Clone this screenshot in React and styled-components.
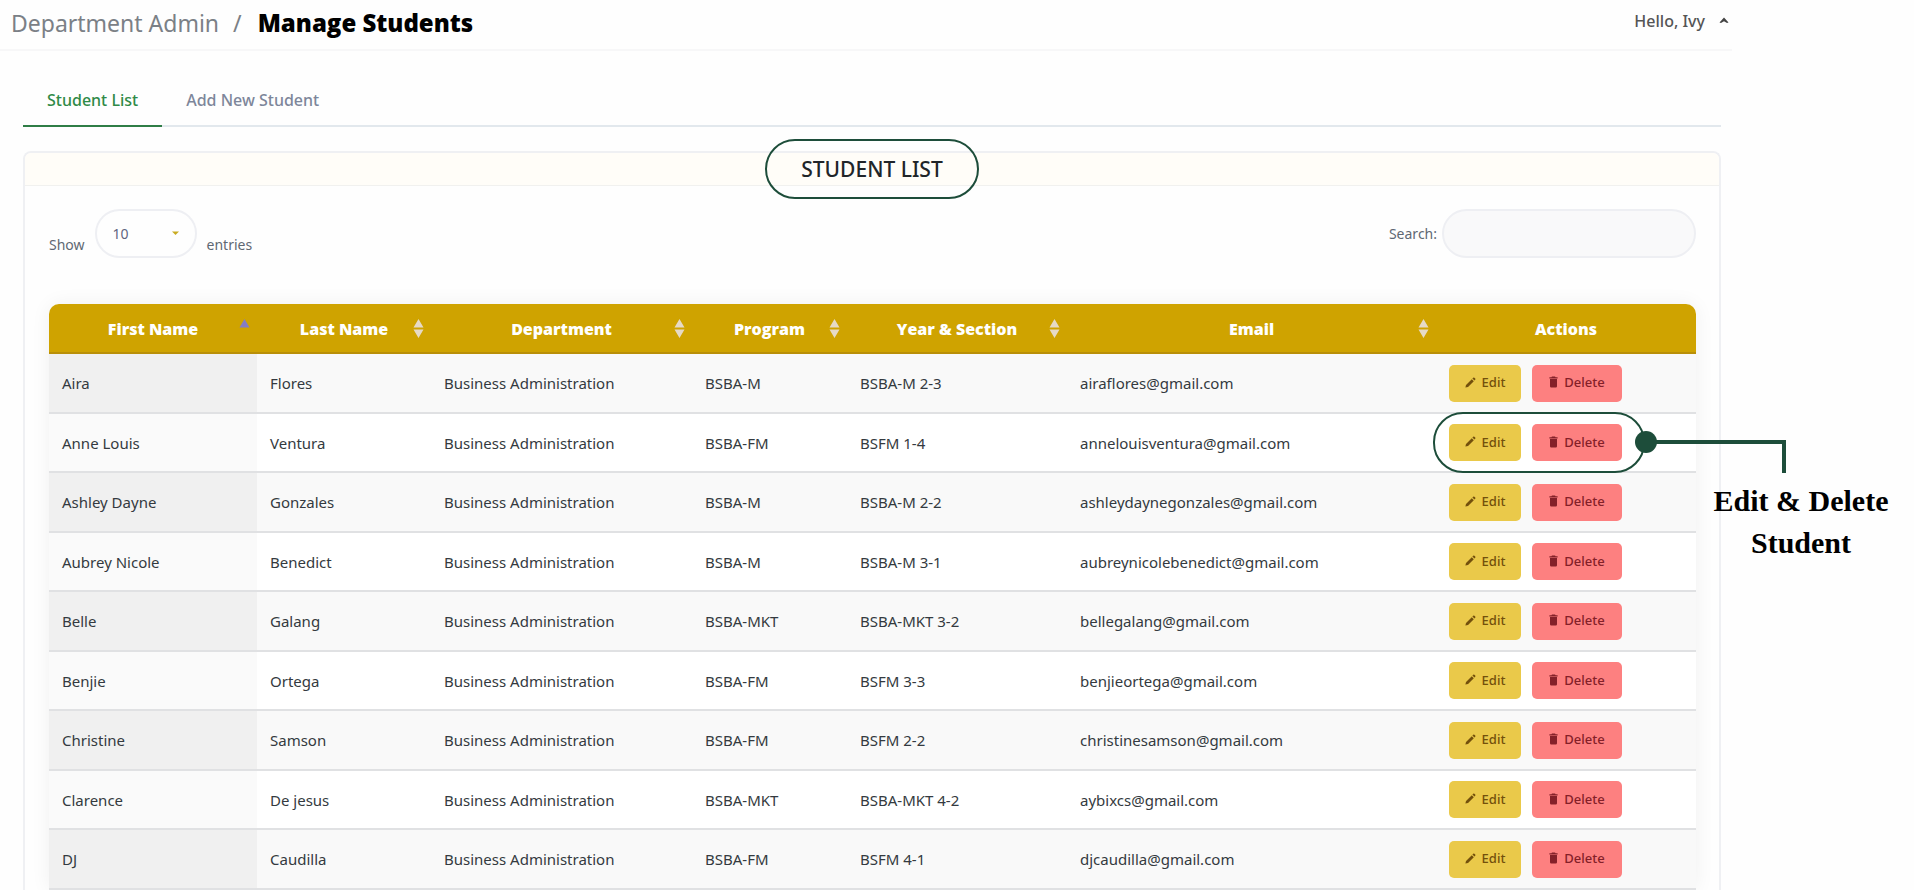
import React from "react";
import styled, { createGlobalStyle } from "styled-components";

const GlobalStyle = createGlobalStyle`
  *, *::before, *::after { box-sizing: border-box; }
  body {
    margin: 0;
    background: #fefefe;
    color: #343a40;
    font-family: "Noto Sans", "Open Sans", sans-serif;
    font-size: 15px;
  }
  button, input, select { font: inherit; }
`;

const green = "#1d4d3a";
const heavyFont = `"Open Sans", "Noto Sans", sans-serif`;

const Page = styled.div`
  display: grid;
  grid-template-columns: minmax(0, 1fr) 182px;
  min-height: 100vh;
`;

const Main = styled.main`
  display: flex;
  flex-direction: column;
`;

const TopBar = styled.header`
  display: flex;
  align-items: center;
  justify-content: space-between;
  height: 51px;
  padding: 0 3px 4px 11px;
  border-bottom: 2px solid #f7f7f8;
`;

const Breadcrumb = styled.nav`
  display: flex;
  align-items: center;
  gap: 14px;
  font-size: 23px;
  line-height: 32px;
  color: #7b8086;
`;

const Crumb = styled.a`
  color: inherit;
  text-decoration: none;
`;

const PageTitle = styled.h1`
  margin: 0 0 0 2px;
  font-family: ${heavyFont};
  font-size: 24px;
  font-weight: 800;
  color: #000;
`;

const UserMenu = styled.button`
  display: flex;
  align-items: center;
  gap: 14px;
  padding: 0 0 4px;
  border: 0;
  background: none;
  color: #555;
  font-size: 16px;
  font-weight: 500;
  line-height: 24px;
`;

const Content = styled.div`
  flex: 1;
  display: flex;
  flex-direction: column;
  padding: 24px 11px 0 23px;
`;

const Tabs = styled.nav`
  display: flex;
  height: 52px;
  border-bottom: 2px solid #e2e8ed;
`;

const Tab = styled.button`
  height: 52px;
  padding: 0 24px;
  border: 0;
  border-bottom: 2px solid ${(p) => (p.$active ? "#2f7d46" : "transparent")};
  background: none;
  color: ${(p) => (p.$active ? "#2f8a47" : "#7d869a")};
  font-size: 16px;
  font-weight: 500;
`;

const Card = styled.section`
  flex: 1;
  margin-top: 24px;
  border: 2px solid #eff0f3;
  border-bottom: 0;
  border-radius: 8px 8px 0 0;
`;

const CardHeader = styled.div`
  display: flex;
  justify-content: center;
  height: 33px;
  border-bottom: 1px solid #f1f1ef;
  border-radius: 6px 6px 0 0;
  background: #fffdf8;
`;

const CardTitle = styled.h2`
  position: relative;
  margin: 0;
  font-size: 21px;
  font-weight: 500;
  line-height: 32px;
  color: #212529;
`;

const Ring = styled.span`
  position: absolute;
  inset: ${(p) => p.$inset};
  border: 2px solid ${green};
  border-radius: 30px;
  pointer-events: none;
`;

const CardBody = styled.div`
  padding: 23px 23px 0 24px;
`;

const Controls = styled.div`
  display: flex;
  align-items: center;
  justify-content: space-between;
  margin-bottom: 46px;
  font-size: 14px;
  color: #5f6873;
`;

const LengthLabel = styled.label`
  display: flex;
  align-items: flex-end;
  gap: 10px;
  line-height: 26px;
`;

const SelectWrap = styled.span`
  position: relative;
  display: block;

  svg {
    position: absolute;
    top: 22px;
    right: 18px;
    pointer-events: none;
  }
`;

const Select = styled.select`
  display: block;
  width: 102px;
  height: 49px;
  padding: 0 16px;
  appearance: none;
  border: 2px solid #eeeff3;
  border-radius: 25px;
  background: #fefefe;
  color: #5f6580;
`;

const SearchLabel = styled.label`
  display: flex;
  align-items: center;
  gap: 5px;
`;

const SearchInput = styled.input`
  width: 254px;
  height: 49px;
  padding: 0 20px;
  border: 2px solid #eeeff3;
  border-radius: 25px;
  background: #f9f9fa;
`;

const Table = styled.table`
  width: 100%;
  table-layout: fixed;
  border-collapse: separate;
  border-spacing: 0;
  border-radius: 10px 10px 0 0;
  box-shadow: 0 0 20px rgba(0, 0, 0, 0.06);
`;

const Th = styled.th`
  position: relative;
  height: 50px;
  padding: 2px 13px 0;
  border-bottom: 2px solid #b98f08;
  background: #cfa300;
  color: #fff;
  font-family: ${heavyFont};
  font-size: 16px;
  font-weight: 800;

  &:first-child { border-top-left-radius: 10px; }
  &:last-child { border-top-right-radius: 10px; }

  svg {
    position: absolute;
    right: 7px;
    top: 15px;
  }
`;

const Row = styled.tr`
  height: 59px;
  background: #fff;

  &:nth-child(odd) {
    height: 60px;
    background: #f9f9f9;
  }
`;

const Td = styled.td`
  padding: 0 13px;
  border-bottom: 2px solid #e0e1e3;
  font-size: 15px;
  white-space: nowrap;

  &:first-child { background: #fafafa; }
  ${Row}:nth-child(odd) &:first-child { background: #f0f0f0; }
`;

const Actions = styled.div`
  position: relative;
  display: inline-flex;
  gap: 11px;
  vertical-align: middle;
`;

const tones = {
  edit: { width: "72px", background: "#eac94a", color: "#73500c" },
  delete: { width: "90px", background: "#fd8080", color: "#842029" },
};

const ActionButton = styled.button`
  display: flex;
  align-items: center;
  justify-content: center;
  gap: 6px;
  width: ${(p) => tones[p.$tone].width};
  height: 37px;
  padding: 0 0 2px;
  border: 0;
  border-radius: 5px;
  background: ${(p) => tones[p.$tone].background};
  color: ${(p) => tones[p.$tone].color};
  font-size: 13px;
  font-weight: 500;
`;

const Connector = styled.svg`
  position: absolute;
  left: 186px;
  top: 7px;
  pointer-events: none;
`;

const CalloutText = styled.p`
  position: absolute;
  left: 262px;
  top: 56px;
  width: 180px;
  margin: 0;
  color: #000;
  font-family: "Liberation Serif", "Times New Roman", serif;
  font-size: 30px;
  font-weight: 700;
  line-height: 42px;
  text-align: center;
  white-space: normal;
`;

const CaretUp = () => (
  <svg width="10" height="7" viewBox="0 0 10 7" aria-hidden="true">
    <path d="M0.5 5.6 5 0.6l4.5 5L8 6 5 4.3 2 6z" fill="#444" />
  </svg>
);

const CaretDown = () => (
  <svg width="7" height="4" viewBox="0 0 7 4" aria-hidden="true">
    <path d="M0 0.5h7L3.5 4z" fill="#c9ab22" />
  </svg>
);

const SortIcon = ({ ascending }) => (
  <svg width="11" height="20" viewBox="0 0 11 20" aria-hidden="true">
    {ascending ? (
      <path d="M5.5 0 10.5 8.5H.5z" fill="#847cc4" />
    ) : (
      <path d="M5.5 0 10.5 8.5H.5zM.5 10.5h10L5.5 19z" fill="#e6dac6" />
    )}
  </svg>
);

const PencilIcon = () => (
  <svg width="11" height="11" viewBox="0 0 11 11" aria-hidden="true">
    <path
      d="M8.2.8q.6-.6 1.2 0l.8.8q.6.6 0 1.2l-.8.8L7.4 1.6zM6.800 2.200 8.800 4.200 3 10 .4 10.600 1 8z"
      fill="currentColor"
    />
  </svg>
);

const TrashIcon = () => (
  <svg width="9" height="12" viewBox="0 0 9 12" aria-hidden="true">
    <path
      d="M3 .5h3l.6.8H8.6v1.2H.4V1.3h2zM1 3h7v7.2q0 1.3-1.2 1.3H2.2Q1 11.500 1 10.200z"
      fill="currentColor"
    />
  </svg>
);

const columns = [
  { name: "First Name", width: 208, sort: "asc" },
  { name: "Last Name", width: 174, sort: "both" },
  { name: "Department", width: 261, sort: "both" },
  { name: "Program", width: 155, sort: "both" },
  { name: "Year & Section", width: 220, sort: "both" },
  { name: "Email", width: 369, sort: "both" },
  { name: "Actions", width: 260 },
];

const students = [
  ["Aira", "Flores", "BSBA-M", "BSBA-M 2-3", "airaflores@gmail.com"],
  ["Anne Louis", "Ventura", "BSBA-FM", "BSFM 1-4", "annelouisventura@gmail.com"],
  ["Ashley Dayne", "Gonzales", "BSBA-M", "BSBA-M 2-2", "ashleydaynegonzales@gmail.com"],
  ["Aubrey Nicole", "Benedict", "BSBA-M", "BSBA-M 3-1", "aubreynicolebenedict@gmail.com"],
  ["Belle", "Galang", "BSBA-MKT", "BSBA-MKT 3-2", "bellegalang@gmail.com"],
  ["Benjie", "Ortega", "BSBA-FM", "BSFM 3-3", "benjieortega@gmail.com"],
  ["Christine", "Samson", "BSBA-FM", "BSFM 2-2", "christinesamson@gmail.com"],
  ["Clarence", "De jesus", "BSBA-MKT", "BSBA-MKT 4-2", "aybixcs@gmail.com"],
  ["DJ", "Caudilla", "BSBA-FM", "BSFM 4-1", "djcaudilla@gmail.com"],
];

const Callout = () => (
  <>
    <Ring $inset="-12px -23px -12px -16px" />
    <Connector width="154" height="44" viewBox="0 0 154 44" aria-hidden="true">
      <circle cx="11" cy="11" r="11" fill={green} />
      <path d="M11 11H149V42" fill="none" stroke={green} strokeWidth="4" />
    </Connector>
    <CalloutText>
      Edit &amp; Delete Student
    </CalloutText>
  </>
);

const StudentRow = ({ student, annotated }) => {
  const [first, last, program, section, email] = student;
  return (
    <Row>
      <Td>{first}</Td>
      <Td>{last}</Td>
      <Td>Business Administration</Td>
      <Td>{program}</Td>
      <Td>{section}</Td>
      <Td>{email}</Td>
      <Td>
        <Actions>
          <ActionButton type="button" $tone="edit">
            <PencilIcon />
            Edit
          </ActionButton>
          <ActionButton type="button" $tone="delete">
            <TrashIcon />
            Delete
          </ActionButton>
          {annotated && <Callout />}
        </Actions>
      </Td>
    </Row>
  );
};

export default function App() {
  return (
    <>
      <GlobalStyle />
      <Page>
        <Main>
          <TopBar>
            <Breadcrumb>
              <Crumb href="#admin">Department Admin</Crumb>
              <span>/</span>
              <PageTitle>Manage Students</PageTitle>
            </Breadcrumb>
            <UserMenu type="button">
              Hello, Ivy
              <CaretUp />
            </UserMenu>
          </TopBar>
          <Content>
            <Tabs>
              <Tab type="button" $active>Student List</Tab>
              <Tab type="button">Add New Student</Tab>
            </Tabs>
            <Card>
              <CardHeader>
                <CardTitle>
                  STUDENT LIST
                  <Ring $inset="-14px -36px" />
                </CardTitle>
              </CardHeader>
              <CardBody>
                <Controls>
                  <LengthLabel htmlFor="length">
                    Show
                    <SelectWrap>
                      <Select id="length" defaultValue="10">
                        <option>10</option>
                        <option>25</option>
                        <option>50</option>
                        <option>100</option>
                      </Select>
                      <CaretDown />
                    </SelectWrap>
                    entries
                  </LengthLabel>
                  <SearchLabel htmlFor="search">
                    Search:
                    <SearchInput id="search" type="search" />
                  </SearchLabel>
                </Controls>
                <Table>
                  <colgroup>
                    {columns.map((c) => (
                      <col key={c.name} width={c.width} />
                    ))}
                  </colgroup>
                  <thead>
                    <tr>
                      {columns.map((c) => (
                        <Th key={c.name} scope="col">
                          {c.name}
                          {c.sort && <SortIcon ascending={c.sort === "asc"} />}
                        </Th>
                      ))}
                    </tr>
                  </thead>
                  <tbody>
                    {students.map((s, i) => (
                      <StudentRow key={s[4]} student={s} annotated={i === 1} />
                    ))}
                  </tbody>
                </Table>
              </CardBody>
            </Card>
          </Content>
        </Main>
      </Page>
    </>
  );
}
